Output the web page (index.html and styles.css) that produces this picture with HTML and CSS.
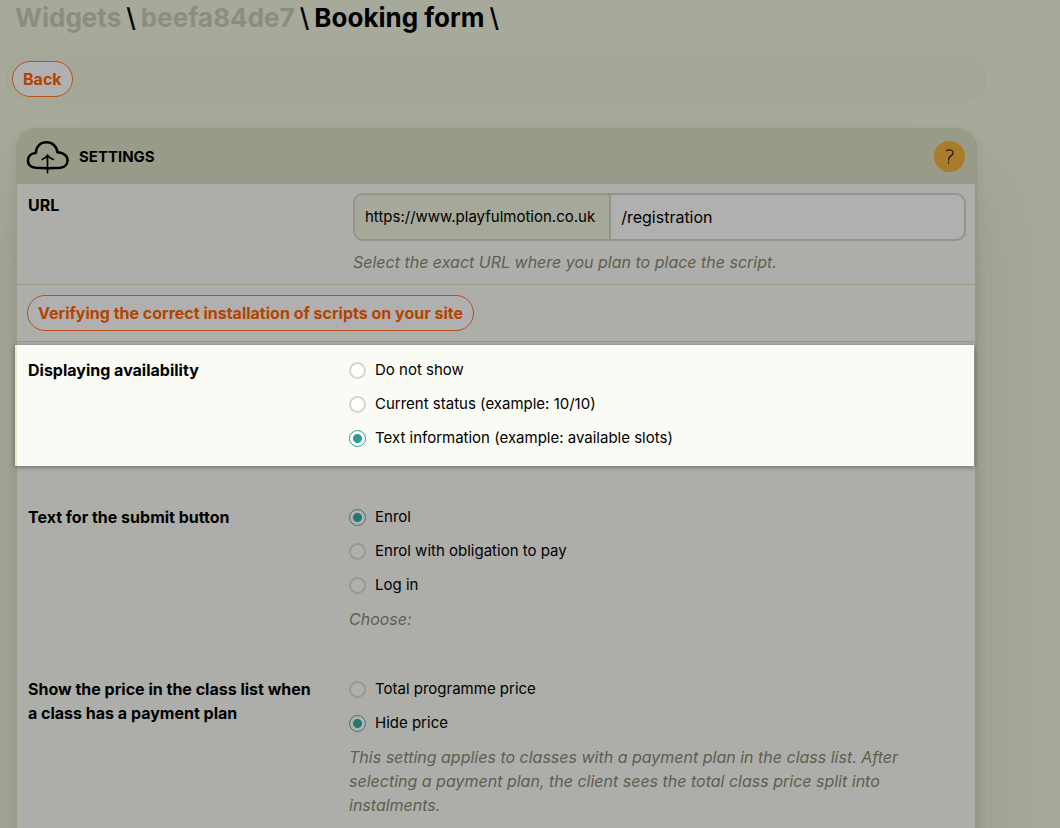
FILE: index.html
```html
<!DOCTYPE html>
<html lang="en">
  <head>
    <meta charset="UTF-8" />
    <meta name="viewport" content="width=device-width, initial-scale=1.0" />
    <title>Booking form</title>
    <link rel="stylesheet" href="styles.css">
  </head>
  <body>
    <h1 class="breadcrumb">
      <a href="#widgets">Widgets</a>
      <span>\</span>
      <a href="#widget">beefa84de7</a>
      <span>\</span>
      Booking form
      <span>\</span>
    </h1>

    <div class="toolbar">
      <button type="button" class="btn">Back</button>
    </div>

    <form class="card">
      <div class="card-header">
        <svg class="cloud" viewBox="0 0 44 36" fill="none" stroke="#000" stroke-linecap="round" stroke-linejoin="round">
          <path stroke-width="2.6" d="M10 29C5 28.500 2 26 2 21.500C2 17 5.500 14.200 10 14C10.500 7 15 3 21 3C27 3 31.500 7 32 13C38 13.500 42.500 16.500 42.500 21.500C42.500 26 39 28.500 35 29C27 29.600 18 29.600 10 29Z" />
          <path stroke-width="1.700" d="M22 34V16M16.500 20.500C19 19.500 21 18 22 16.200C23 18 25 19.500 28 20.500" />
        </svg>
        <h2>SETTINGS</h2>
        <button type="button" class="help" aria-label="Help">
          <svg viewBox="0 0 10 16" fill="none" stroke="#1c1608" stroke-width="1.200">
            <path d="M1 2C2.500 .8 4.500 .6 6.300 1.200C8.300 1.900 8.600 4.300 7 6C5.500 7.600 3.600 8 3.600 10.500V11.500M3.500 12.800V14.500" />
          </svg>
        </button>
      </div>

      <div class="row">
        <label class="label" for="url">URL</label>
        <div class="field url-field">
          <div class="input-group">
            <span class="addon">https://www.playfulmotion.co.uk</span>
            <input type="text" id="url" value="/registration" />
          </div>
          <p class="hint">Select the exact URL where you plan to place the script.</p>
        </div>
      </div>

      <div class="row action-row">
        <button type="button" class="btn">Verifying the correct installation of scripts on your site</button>
      </div>

      <div class="row option-row highlight" role="radiogroup" aria-labelledby="availability">
        <div class="label" id="availability">Displaying availability</div>
        <div class="field">
          <label class="radio"><input type="radio" name="availability" />Do not show</label>
          <label class="radio"><input type="radio" name="availability" />Current status (example: 10/10)</label>
          <label class="radio"><input type="radio" name="availability" checked />Text information (example: available slots)</label>
        </div>
      </div>

      <div class="row option-row" role="radiogroup" aria-labelledby="submit-text">
        <div class="label" id="submit-text">Text for the submit button</div>
        <div class="field">
          <label class="radio"><input type="radio" name="submit" checked />Enrol</label>
          <label class="radio"><input type="radio" name="submit" />Enrol with obligation to pay</label>
          <label class="radio"><input type="radio" name="submit" />Log in</label>
          <p class="hint">Choose:</p>
        </div>
      </div>

      <div class="row option-row" role="radiogroup" aria-labelledby="price">
        <div class="label" id="price">Show the price in the class list when a class has a payment plan</div>
        <div class="field">
          <label class="radio"><input type="radio" name="price" />Total programme price</label>
          <label class="radio"><input type="radio" name="price" checked />Hide price</label>
          <p class="hint">This setting applies to classes with a payment plan in the class list. After selecting a payment plan, the client sees the total class price split into instalments.</p>
        </div>
      </div>
    </form>
  </body>
</html>
```
FILE: styles.css
```css
* {
  margin: 0;
  padding: 0;
  box-sizing: border-box;
}
html {
  overflow: hidden;
}
body {
  background-color: #a7a99a;
  color: #000;
  font-family: "Inter", sans-serif;
  font-size: 15px;
  line-height: 24px;
  padding: 2px 74px 0 6px;
}
button,
input {
  font: inherit;
}
.breadcrumb {
  display: flex;
  gap: 5px;
  padding-left: 9px;
  font-size: 26px;
  line-height: 32px;
  white-space: nowrap;
}
.breadcrumb a {
  color: #8b8e7f;
  text-decoration: none;
}
.breadcrumb span {
  font-weight: 500;
}
.toolbar {
  margin-top: 21px;
  padding: 5px;
  border: 1px solid #a3a595;
  border-radius: 24px;
  background-color: #a5a798;
}
.btn {
  display: block;
  height: 36px;
  padding: 0 10px;
  border: 1px solid #b8501a;
  border-radius: 18px;
  background-color: #b0b0b1;
  color: #b34400;
  font-size: 16px;
  font-weight: 700;
  cursor: pointer;
}
.card {
  margin: 25px 9px 0 10px;
  padding-bottom: 32px;
  border: 1px solid #989b88;
  border-right: 2px solid #95978a;
  border-radius: 20px 20px 0 0;
  background-color: #adaeaa;
  box-shadow: 0 60px 70px rgba(70, 72, 60, 0.16), 0 4px 10px rgba(70, 72, 60, 0.14);
}
.card-header {
  display: flex;
  align-items: center;
  gap: 10px;
  height: 55px;
  padding: 0 10px 0 9px;
  border-radius: 19px 19px 0 0;
  background-color: #989b88;
}
.card-header h2 {
  flex: 1;
  font-size: 15px;
  font-weight: 700;
}
.cloud {
  width: 43px;
  height: 36px;
}
.help {
  display: flex;
  align-items: center;
  justify-content: center;
  width: 31px;
  height: 31px;
  border: none;
  border-radius: 50%;
  background-color: #a97b2b;
  cursor: pointer;
}
.help svg {
  width: 10px;
  height: 16px;
}
.row {
  display: flex;
  padding: 9px 9px 10px 11px;
  border-bottom: 1px solid #989b84;
}
.label {
  flex: none;
  width: 321px;
  padding-right: 30px;
  font-size: 16px;
  font-weight: 700;
}
.field {
  flex: 1;
}
.url-field {
  padding-left: 4px;
}
.input-group {
  display: flex;
  height: 48px;
  border: 2px solid #92948a;
  border-radius: 10px;
  background-color: #b0b0b1;
  overflow: hidden;
}
.addon {
  padding: 10px 14px 10px 10px;
  border-right: 2px solid #92948a;
  background-color: #a6a899;
}
.input-group input {
  flex: 1;
  min-width: 0;
  padding: 0 10px;
  border: none;
  background: none;
  color: #000;
  font-size: 16px;
}
.hint {
  color: #5d5e50;
  font-size: 16px;
  font-style: italic;
}
.url-field .hint {
  margin-top: 9px;
}
.action-row {
  padding: 10px;
  margin-bottom: 3px;
}
.option-row {
  padding: 39px 9px 7px 11px;
  border-bottom: none;
}
.option-row .hint {
  max-width: 570px;
}
.radio {
  display: flex;
  align-items: center;
  gap: 9px;
  margin-bottom: 10px;
}
.radio input {
  appearance: none;
  width: 17px;
  height: 17px;
  border: 2px solid #989991;
  border-radius: 50%;
  background-color: #b0b0b1;
}
.radio input:checked {
  border: 1px solid #2f7c70;
  background: radial-gradient(circle, #23776b 4px, #b0b0b1 5px);
}
.highlight {
  position: relative;
  margin: 0 1px 0 -2px;
  padding: 13px 9px 6px 11px;
  border-left: 2px solid #e7e9cf;
  background-color: #fafbf5;
  box-shadow: 0 1px 5px rgba(0, 0, 0, 0.4);
}
.highlight .radio input {
  border-color: #d5d7cd;
  background-color: #fff;
}
.highlight .radio input:checked {
  border-color: #2f9b8f;
  background: radial-gradient(circle, #2f9b8f 4px, #fff 5px);
}
```
